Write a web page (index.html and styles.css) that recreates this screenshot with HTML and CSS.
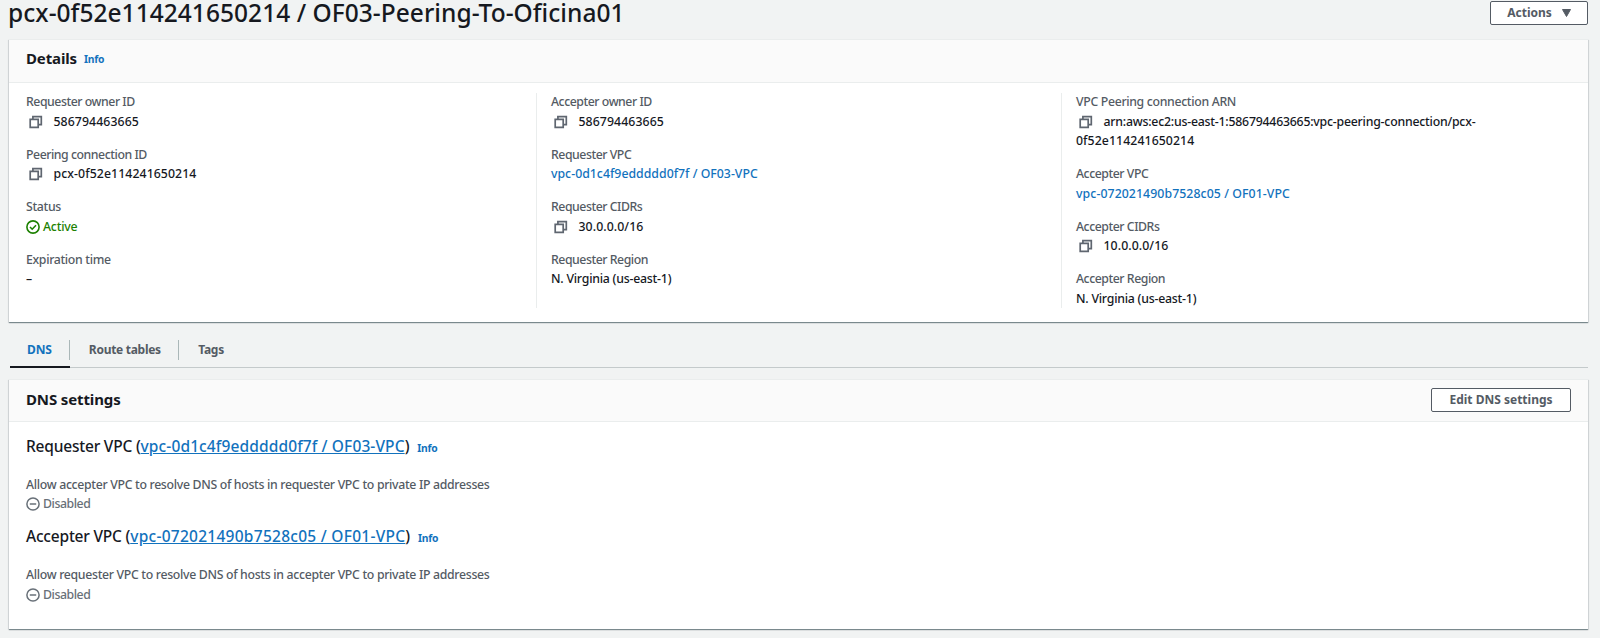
FILE: index.html
```
<!DOCTYPE html>
<html lang="en">
<head>
<meta charset="utf-8">
<title>pcx-0f52e114241650214 / OF03-Peering-To-Oficina01</title>
<link rel="stylesheet" href="styles.css">
</head>
<body>
<svg class="defs" width="0" height="0" aria-hidden="true">
  <symbol id="copy" viewBox="0 0 14 14">
    <path d="M1.2 4.4h8v7.9H1.2z M3.9 4.4V1.6h8.4v8H9.2" fill="none" stroke="#5f6670" stroke-width="1.7"/>
  </symbol>
  <symbol id="minus" viewBox="0 0 14 14">
    <circle cx="7" cy="7" r="6.1" fill="none" stroke="#687078" stroke-width="1.5"/>
    <path d="M3.8 7h6.4" stroke="#687078" stroke-width="1.5"/>
  </symbol>
</svg>
<header class="page-head">
  <h1 class="title">pcx-0f52e114241650214 / OF03-Peering-To-Oficina01</h1>
  <button class="btn btn-actions">Actions <svg width="9" height="8" viewBox="0 0 9 8"><path d="M.5 .5h8L4.5 7.5z" fill="#545b64" stroke="#545b64" stroke-linejoin="round"/></svg></button>
</header>
<section class="panel details">
  <div class="panel-head"><h2>Details</h2><a class="info">Info</a></div>
  <div class="cols">
    <div class="col">
      <dl><dt>Requester owner ID</dt><dd class="num"><svg class="copy"><use href="#copy"/></svg>586794463665</dd></dl>
      <dl><dt>Peering connection ID</dt><dd class="num"><svg class="copy"><use href="#copy"/></svg>pcx-0f52e114241650214</dd></dl>
      <dl><dt class="loose">Status</dt><dd class="status ok"><svg width="14" height="14" viewBox="0 0 14 14"><circle cx="7" cy="7" r="6.1" fill="none" stroke="#1d8102" stroke-width="1.6"/><path d="M4 7l2.2 2.2L10 5.2" fill="none" stroke="#1d8102" stroke-width="1.6"/></svg>Active</dd></dl>
      <dl><dt class="loose">Expiration time</dt><dd>–</dd></dl>
    </div>
    <div class="col">
      <dl><dt>Accepter owner ID</dt><dd class="num"><svg class="copy"><use href="#copy"/></svg>586794463665</dd></dl>
      <dl><dt>Requester VPC</dt><dd><a class="name">vpc-0d1c4f9eddddd0f7f / OF03-VPC</a></dd></dl>
      <dl><dt>Requester CIDRs</dt><dd class="num"><svg class="copy"><use href="#copy"/></svg>30.0.0.0/16</dd></dl>
      <dl><dt>Requester Region</dt><dd>N. Virginia (us-east-1)</dd></dl>
    </div>
    <div class="col">
      <dl><dt class="loose">VPC Peering connection ARN</dt><dd><svg class="copy"><use href="#copy"/></svg>arn:aws:ec2:us-east-1:586794463665:vpc-peering-connection/pcx-<br><span class="num">0f52e114241650214</span></dd></dl>
      <dl><dt>Accepter VPC</dt><dd class="num"><a>vpc-072021490b7528c05 / OF01-VPC</a></dd></dl>
      <dl><dt>Accepter CIDRs</dt><dd class="num"><svg class="copy"><use href="#copy"/></svg>10.0.0.0/16</dd></dl>
      <dl><dt>Accepter Region</dt><dd>N. Virginia (us-east-1)</dd></dl>
    </div>
  </div>
</section>
<nav class="tabs">
  <a class="tab active"><span>DNS</span></a>
  <a class="tab"><span>Route tables</span></a>
  <a class="tab"><span>Tags</span></a>
</nav>
<section class="panel dns">
  <div class="panel-head"><h2>DNS settings</h2><button class="btn btn-edit">Edit DNS settings</button></div>
  <div class="dns-body">
    <h3>Requester VPC (<a class="id-a">vpc-0d1c4f9eddddd0f7f / OF03-VPC</a>)<a class="info">Info</a></h3>
    <p class="desc">Allow accepter VPC to resolve DNS of hosts in requester VPC to private IP addresses</p>
    <p class="status off"><svg width="14" height="14"><use href="#minus"/></svg>Disabled</p>
    <h3>Accepter VPC (<a class="id-b">vpc-072021490b7528c05 / OF01-VPC</a>)<a class="info">Info</a></h3>
    <p class="desc">Allow requester VPC to resolve DNS of hosts in accepter VPC to private IP addresses</p>
    <p class="status off"><svg width="14" height="14"><use href="#minus"/></svg>Disabled</p>
  </div>
</section>
</body>
</html>
```
FILE: styles.css
```
* { box-sizing: border-box; margin: 0; padding: 0; }
body {
  height: 638px; overflow: hidden; background: #f1f3f3; color: #16191f;
  padding: 0 12px 0 9px;
  font: 500 12.3px/19.6px "Noto Sans", "Open Sans", sans-serif;
}
.defs { position: absolute; }
a { color: #1272bd; }

.page-head { display: flex; justify-content: space-between; align-items: flex-start; height: 39px; margin-left: -1px; }
.title { font-size: 24.5px; font-weight: 500; line-height: 26px; letter-spacing: .04px; }
.btn {
  display: flex; align-items: center; justify-content: center; height: 24px;
  background: #fff; border: 1px solid #545b64; border-radius: 2px; color: #545b64;
  font: 700 12px/20px "Noto Sans", "Open Sans", sans-serif;
}
.btn-actions { width: 98px; gap: 10px; margin-top: 1px; }
.btn-edit { width: 140px; margin-left: auto; }

.panel { background: #fff; border-top: 1px solid #eaeded; box-shadow: 0 1px 1px 0 rgba(0,28,36,.4), 1px 1px 1px 0 rgba(0,28,36,.08), -1px 1px 1px 0 rgba(0,28,36,.08); }
.panel-head {
  display: flex; align-items: center; height: 42px; padding: 0 17px 4px 17px;
  background: #fafafa; border-bottom: 1px solid #eaeded;
}
.panel-head .btn { position: relative; top: 1px; }
h2 { font-size: 15px; line-height: 20px; font-weight: 700; letter-spacing: -.13px; }
.info { font-size: 10.3px; font-weight: 700; letter-spacing: -.25px; margin-left: 7px; }
.panel-head .info { position: relative; top: 2px; }

.details { height: 283px; }
.details .panel-head { height: 43px; padding-bottom: 6px; }
.cols { display: grid; grid-template-columns: 527px 525px 1fr; padding-top: 10px; }
.col { height: 215px; padding-left: 14px; border-left: 1px solid #eaeded; }
.col:first-child { padding-left: 17px; border-left: 0; }
.col dl:first-child { margin-top: -1px; }
dl { margin-bottom: 13.4px; }
dt { color: #545b64; letter-spacing: -.46px; }
dt.loose { letter-spacing: -.33px; }
dd { letter-spacing: -.22px; white-space: nowrap; }
.num { letter-spacing: .08px; }
.name { letter-spacing: .01px; }
.copy { width: 14px; height: 14px; margin: 0 10.5px 0 3px; vertical-align: -3px; }
.status { display: flex; align-items: center; gap: 3px; }
.ok { color: #1d8102; }
.off { color: #687078; letter-spacing: -.45px; }

.tabs { display: flex; height: 46px; margin: 0 0 11px 1px; padding-top: 15px; border-bottom: 1.5px solid #c4cacb; font-size: 12px; }
.tab { display: flex; align-items: flex-start; height: 31px; color: #545b64; font-weight: 700; letter-spacing: -.29px; }
.tab span { line-height: 20px; margin-top: 3px; padding: 0 17.5px 0 19px; border-right: 1px solid #aab7b8; }
.tab:last-child span { border: 0; }
.tab.active { color: #1272bd; letter-spacing: -.1px; border-bottom: 2px solid #16191f; }
.tab.active span { padding: 0 17px; }

.dns { height: 250px; }
.dns-body { padding: 11.5px 17px; }
h3 { font-size: 15.5px; font-weight: 500; line-height: 24px; letter-spacing: -.2px; }
h3 a { text-decoration: underline; }
h3 .info { text-decoration: none; margin-left: 8px; }
.id-a { letter-spacing: .12px; }
.id-b { letter-spacing: .27px; }
.desc { margin-top: 15px; color: #545b64; letter-spacing: -.32px; }
.off + h3 { margin-top: 10.5px; }
```
